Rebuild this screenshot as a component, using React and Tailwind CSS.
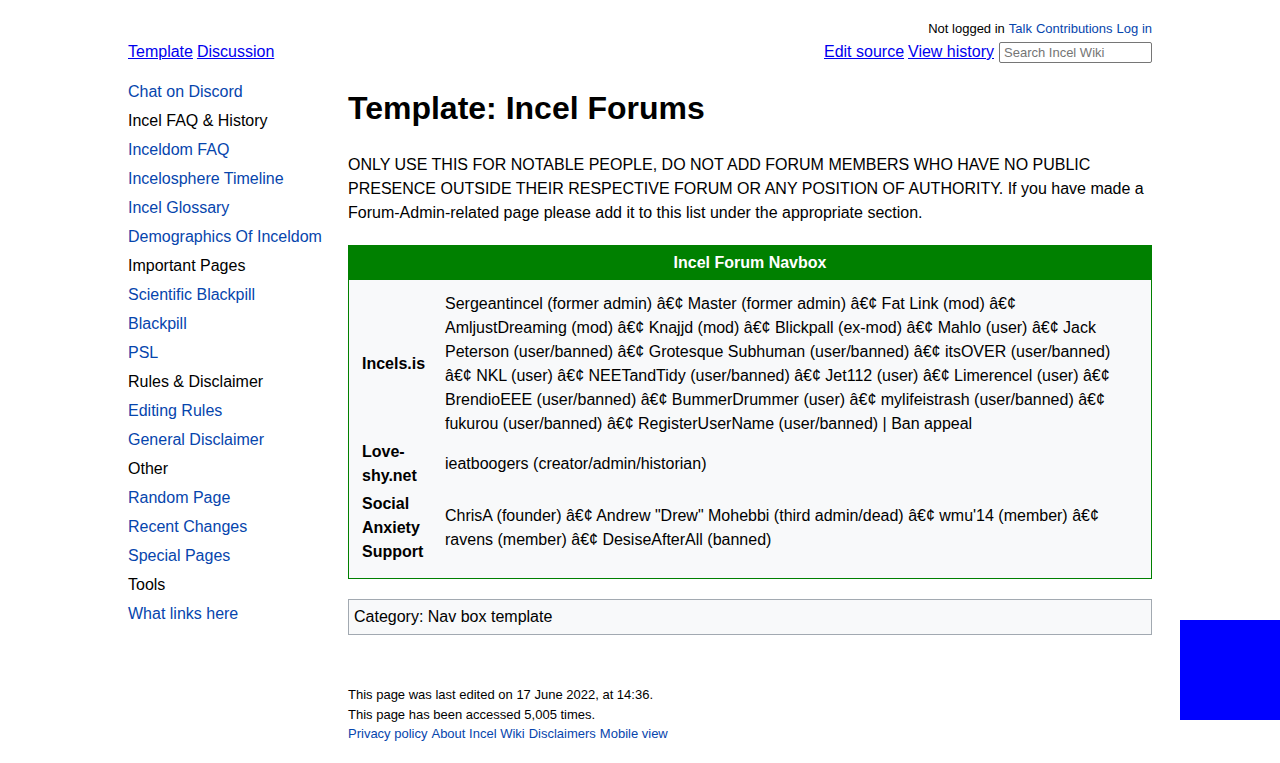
const sidebar = [
  { label: 'Chat on Discord', link: true },
  { label: 'Incel FAQ & History' },
  { label: 'Inceldom FAQ', link: true },
  { label: 'Incelosphere Timeline', link: true },
  { label: 'Incel Glossary', link: true },
  { label: 'Demographics Of Inceldom', link: true },
  { label: 'Important Pages' },
  { label: 'Scientific Blackpill', link: true },
  { label: 'Blackpill', link: true },
  { label: 'PSL', link: true },
  { label: 'Rules & Disclaimer' },
  { label: 'Editing Rules', link: true },
  { label: 'General Disclaimer', link: true },
  { label: 'Other' },
  { label: 'Random Page', link: true },
  { label: 'Recent Changes', link: true },
  { label: 'Special Pages', link: true },
  { label: 'Tools' },
  { label: 'What links here', link: true },
];

const rows = [
  {
    name: 'Incels.is',
    text: 'Sergeantincel (former admin) â€¢ Master (former admin) â€¢ Fat Link (mod) â€¢ AmljustDreaming (mod) â€¢ Knajjd (mod) â€¢ Blickpall (ex-mod) â€¢ Mahlo (user) â€¢ Jack Peterson (user/banned) â€¢ Grotesque Subhuman (user/banned) â€¢ itsOVER (user/banned) â€¢ NKL (user) â€¢ NEETandTidy (user/banned) â€¢ Jet112 (user) â€¢ Limerencel (user) â€¢ BrendioEEE (user/banned) â€¢ BummerDrummer (user) â€¢ mylifeistrash (user/banned) â€¢ fukurou (user/banned) â€¢ RegisterUserName (user/banned) | Ban appeal',
  },
  { name: 'Love-shy.net', text: 'ieatboogers (creator/admin/historian)' },
  {
    name: 'Social Anxiety Support',
    text: 'ChrisA (founder) â€¢ Andrew "Drew" Mohebbi (third admin/dead) â€¢ wmu\'14 (member) â€¢ ravens (member) â€¢ DesiseAfterAll (banned)',
  },
];

export default function App() {
  return (
    <div className="min-h-[763px] bg-white text-black font-['Liberation_Sans',Arial,sans-serif]">
      <div className="mx-auto w-[1024px] pt-[20px]">
        <div className="flex justify-end text-[13px] leading-[18px]">
          <span>Not logged in</span>
          <span className="ml-1 text-[#0645ad]">Talk</span>
          <span className="ml-1 text-[#0645ad]">Contributions</span>
          <span className="ml-1 text-[#0645ad]">Log in</span>
        </div>
        <div className="mt-[1px] flex items-center justify-between h-[26px] text-[16px]">
          <div className="flex gap-1">
            <a className="text-[#0000ee] underline">Template</a>
            <a className="text-[#0000ee] underline">Discussion</a>
          </div>
          <div className="flex items-center gap-1">
            <a className="text-[#0000ee] underline">Edit source</a>
            <a className="text-[#0000ee] underline">View history</a>
            <input
              placeholder="Search Incel Wiki"
              className="ml-[1px] w-[153px] h-[21px] border border-[#767676] rounded-[2px] px-[4px] text-[13px] placeholder:text-[#757575] outline-none"
            />
          </div>
        </div>

        <div className="flex mt-[12px]">
          <nav className="w-[220px] shrink-0 text-[16px] leading-[29px]">
            {sidebar.map(item => (
              <div key={item.label} className={item.link ? 'text-[#0645ad]' : 'text-black'}>
                {item.label}
              </div>
            ))}
          </nav>

          <main className="w-[804px]">
            <h1 className="mt-[11px] text-[32px] leading-[40px] font-bold">Template: Incel Forums</h1>
            <p className="mt-[25px] text-[16px] leading-[24px]">
              ONLY USE THIS FOR NOTABLE PEOPLE, DO NOT ADD FORUM MEMBERS WHO HAVE NO PUBLIC PRESENCE OUTSIDE THEIR RESPECTIVE FORUM OR ANY POSITION OF AUTHORITY. If you have made a Forum-Admin-related page please add it to this list under the appropriate section.
            </p>

            <div className="mt-[20px] border border-[#008000] bg-[#f8f9fa] text-[16px] leading-[24px]">
              <div className="h-[34px] bg-[#008000] text-white font-bold flex items-center justify-center">
                Incel Forum Navbox
              </div>
              <div className="flex flex-col gap-[4px] pt-[12px] pb-[14px] pl-[13px] pr-[27px]">
                {rows.map(r => (
                  <div key={r.name} className="flex items-center">
                    <div className="w-[70px] shrink-0 font-bold">{r.name}</div>
                    <div className="ml-[13px]">{r.text}</div>
                  </div>
                ))}
              </div>
            </div>

            <div className="mt-[20px] h-[36px] border border-[#a2a9b1] bg-[#f8f9fa] px-[5px] flex items-center text-[16px]">
              Category: Nav box template
            </div>

            <footer className="mt-[50px] text-[13px] leading-[19.5px]">
              <div>This page was last edited on 17 June 2022, at 14:36.</div>
              <div>This page has been accessed 5,005 times.</div>
              <div className="flex gap-1 text-[#0645ad]">
                <span>Privacy policy</span>
                <span>About Incel Wiki</span>
                <span>Disclaimers</span>
                <span>Mobile view</span>
              </div>
            </footer>
          </main>
        </div>
      </div>
      <div className="fixed left-[1180px] top-[620px] w-[100px] h-[100px] bg-[#0000ff]" />
    </div>
  );
}
